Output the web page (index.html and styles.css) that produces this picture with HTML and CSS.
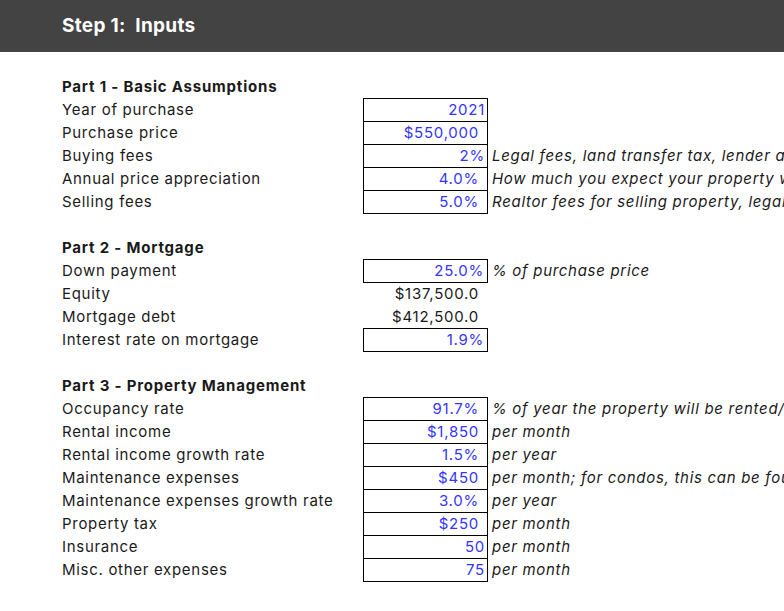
FILE: index.html
```html
<!DOCTYPE html>
<html lang="en">
<head>
<meta charset="utf-8">
<title>Step 1: Inputs</title>
<link rel="stylesheet" href="styles.css">
</head>
<body>
<header class="topbar"><h1 class="title">Step 1:&nbsp; Inputs</h1></header>
<main class="sheet">
  <div class="row"></div>
  <div class="row"><span class="label head">Part 1 - Basic Assumptions</span></div>
  <div class="row"><span class="label">Year of purchase</span><span class="val input pa">2021</span><span class="note"></span></div>
  <div class="row"><span class="label">Purchase price</span><span class="val input pb">$550,000</span><span class="note"></span></div>
  <div class="row"><span class="label">Buying fees</span><span class="val input pa">2%</span><span class="note">Legal fees, land transfer tax, lender appraisal fees, inspection fees, etc.</span></div>
  <div class="row"><span class="label">Annual price appreciation</span><span class="val input pb">4.0%</span><span class="note">How much you expect your property will appreciate in value each year</span></div>
  <div class="row"><span class="label">Selling fees</span><span class="val input pb">5.0%</span><span class="note">Realtor fees for selling property, legal fees, etc.</span></div>
  <div class="row"></div>
  <div class="row"><span class="label head">Part 2 - Mortgage</span></div>
  <div class="row"><span class="label">Down payment</span><span class="val input pc">25.0%</span><span class="note">% of purchase price</span></div>
  <div class="row"><span class="label">Equity</span><span class="val calc pb">$137,500.0</span><span class="note"></span></div>
  <div class="row"><span class="label">Mortgage debt</span><span class="val calc pb">$412,500.0</span><span class="note"></span></div>
  <div class="row"><span class="label">Interest rate on mortgage</span><span class="val input pc">1.9%</span><span class="note"></span></div>
  <div class="row"></div>
  <div class="row"><span class="label head">Part 3 - Property Management</span></div>
  <div class="row"><span class="label">Occupancy rate</span><span class="val input pb">91.7%</span><span class="note">% of year the property will be rented/leased out</span></div>
  <div class="row"><span class="label">Rental income</span><span class="val input pb">$1,850</span><span class="note">per month</span></div>
  <div class="row"><span class="label">Rental income growth rate</span><span class="val input pb">1.5%</span><span class="note">per year</span></div>
  <div class="row"><span class="label">Maintenance expenses</span><span class="val input pb">$450</span><span class="note">per month; for condos, this can be found in the condo fees</span></div>
  <div class="row"><span class="label">Maintenance expenses growth rate</span><span class="val input pb">3.0%</span><span class="note">per year</span></div>
  <div class="row"><span class="label">Property tax</span><span class="val input pb">$250</span><span class="note">per month</span></div>
  <div class="row"><span class="label">Insurance</span><span class="val input pa">50</span><span class="note">per month</span></div>
  <div class="row"><span class="label">Misc. other expenses</span><span class="val input pa">75</span><span class="note">per month</span></div>
  <div class="row"></div>
</main>
</body>
</html>
```
FILE: styles.css
```css
html, body {
  margin: 0;
  padding: 0;
  background: #ffffff;
}
body {
  width: 784px;
  height: 611px;
  overflow: hidden;
  font-family: Inter, "Noto Sans", "Liberation Sans", sans-serif;
  font-size: 15px;
  letter-spacing: 0.7px;
  color: #1a1a1a;
}
.topbar {
  height: 52px;
  background: #434343;
  padding-left: 62px;
  display: flex;
  align-items: center;
}
.title {
  margin: 0;
  font-size: 19px;
  font-weight: 700;
  letter-spacing: 0.3px;
  color: #ffffff;
  line-height: 23px;
  padding-bottom: 2px;
}
.sheet {
  padding-left: 62px;
}
.row {
  display: grid;
  grid-template-columns: 301px 125px 1fr;
  height: 23px;
  line-height: 23px;
}
.label {
  white-space: nowrap;
}
.head {
  font-weight: 700;
  letter-spacing: 0.8px;
}
.val {
  position: relative;
  text-align: right;
  white-space: nowrap;
  letter-spacing: 0.75px;
}
.input {
  color: #3535ff;
}
.input::after {
  content: "";
  position: absolute;
  top: 0;
  left: 0;
  right: 0;
  bottom: -1px;
  border: 1px solid #000000;
  pointer-events: none;
}
.calc {
  color: #1a1a1a;
}
.pa { padding-right: 3px; }
.pb { padding-right: 9px; }
.pc { padding-right: 4px; }
.note {
  font-style: italic;
  white-space: nowrap;
  overflow: hidden;
  padding-left: 4px;
  min-width: 0;
}
```
